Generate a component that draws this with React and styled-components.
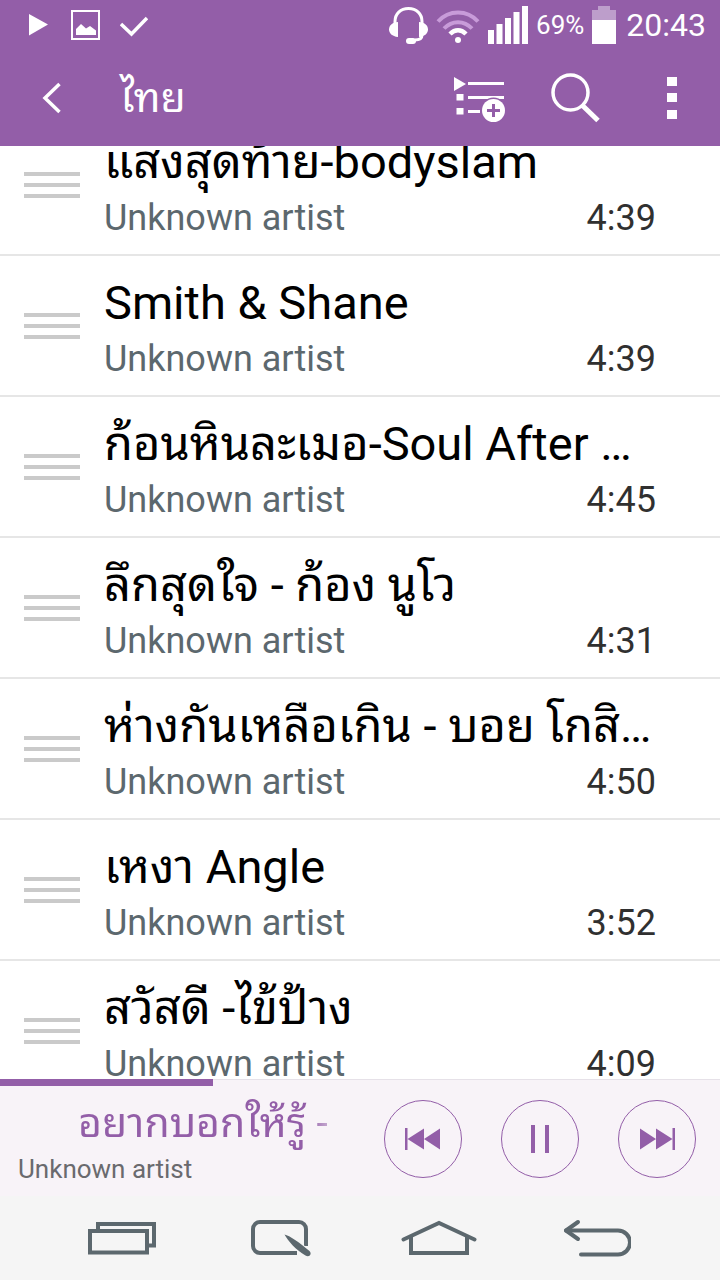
import React, { useLayoutEffect, useRef } from "react";
import styled, { createGlobalStyle } from "styled-components";

const purple = "#935ea8";
const slate = "#5c686e";

const songs = [
  { title: "แสงสุดท้าย-bodyslam", artist: "Unknown artist", time: "4:39" },
  { title: "Smith & Shane", artist: "Unknown artist", time: "4:39" },
  { title: "ก้อนหินละเมอ-Soul After …", artist: "Unknown artist", time: "4:45" },
  { title: "ลึกสุดใจ - ก้อง นูโว", artist: "Unknown artist", time: "4:31" },
  { title: "ห่างกันเหลือเกิน - บอย โกสิ…", artist: "Unknown artist", time: "4:50" },
  { title: "เหงา Angle", artist: "Unknown artist", time: "3:52" },
  { title: "สวัสดี -ไข้ป้าง", artist: "Unknown artist", time: "4:09" },
];

const SCROLL_START = 31;

export default function App() {
  const listRef = useRef(null);

  useLayoutEffect(() => {
    listRef.current.scrollTop = SCROLL_START;
  }, []);

  return (
    <>
      <GlobalStyle />
      <Screen>
        <Header>
          <StatusBar />
          <Toolbar>
            <BackButton aria-label="Back">
              <svg width="20" height="32" viewBox="0 0 20 32" fill="none">
                <path d="M17.500 2L3 16l14.500 14" stroke="#fff" strokeWidth="3.500" />
              </svg>
            </BackButton>
            <PageTitle>ไทย</PageTitle>
            <ToolButton aria-label="Add to playlist">
              <PlaylistIcon />
            </ToolButton>
            <ToolButton aria-label="Search">
              <svg width="50" height="50" viewBox="0 0 50 50" fill="none">
                <circle cx="19.500" cy="19.500" r="17.500" stroke="#fff" strokeWidth="3.500" />
                <path d="M32 33l15 14.500" stroke="#fff" strokeWidth="5" />
              </svg>
            </ToolButton>
            <ToolButton aria-label="More options">
              <svg width="10" height="44" viewBox="0 0 10 44" fill="#fff">
                <rect x="0" y="1" width="10" height="9" />
                <rect x="0" y="17" width="10" height="9" />
                <rect x="0" y="34" width="10" height="9" />
              </svg>
            </ToolButton>
          </Toolbar>
        </Header>

        <SongList ref={listRef}>
          {songs.map((song) => (
            <SongRow key={song.title}>
              <Handle aria-label="Reorder">
                <Grip />
                <Grip />
                <Grip />
              </Handle>
              <SongBody>
                <SongTitle>{song.title}</SongTitle>
                <SongMeta>
                  <Artist>{song.artist}</Artist>
                  <Duration>{song.time}</Duration>
                </SongMeta>
              </SongBody>
            </SongRow>
          ))}
        </SongList>

        <Player>
          <Progress role="progressbar" aria-valuenow={30} style={{ width: "29.6%" }} />
          <NowPlaying>
            <NowTitle>อยากบอกให้รู้ -</NowTitle>
            <NowArtist>Unknown artist</NowArtist>
          </NowPlaying>
          <Controls>
            <RoundButton aria-label="Previous">
              <svg width="36" height="24" viewBox="0 0 36 24" fill={purple}>
                <path d="M0 1h2.500v22H0zM2.500 12L19 1.500v21zM19 12L35 1.500v21z" />
              </svg>
            </RoundButton>
            <RoundButton aria-label="Pause">
              <svg width="18" height="28" viewBox="0 0 18 28" fill={purple}>
                <path d="M0 0h4v28H0zM14 0h4v28h-4z" />
              </svg>
            </RoundButton>
            <RoundButton aria-label="Next">
              <svg width="36" height="24" viewBox="0 0 36 24" fill={purple}>
                <path d="M33.500 1H36v22h-2.500zM33.500 12L17 1.500v21zM17 12L1 1.500v21z" />
              </svg>
            </RoundButton>
          </Controls>
        </Player>

        <SystemNav>
          <NavButton aria-label="Recent apps">
            <svg width="70" height="36" viewBox="0 0 70 36" fill="none" stroke={slate} strokeWidth="4">
              <path d="M10 10V4h56v21.500H60" />
              <rect x="2" y="11" width="57" height="21.500" />
            </svg>
          </NavButton>
          <NavButton aria-label="Quick memo">
            <svg width="60" height="38" viewBox="0 0 60 38" fill="none">
              <path
                d="M46 34H9a7 7 0 0 1-7-7V10a7 7 0 0 1 7-7h39a7 7 0 0 1 7 7v17"
                stroke={slate}
                strokeWidth="4"
              />
              <path d="M38 19L64 42" stroke="#f5f5f5" strokeWidth="9" />
              <path
                d="M33.500 15.500c5 1 15 8 25 16.500 3 3-.5 7-4 4.500C45 31 37 22 33.500 15.500z"
                fill={slate}
              />
            </svg>
          </NavButton>
          <NavButton aria-label="Home">
            <svg
              width="76"
              height="38"
              viewBox="0 0 76 38"
              fill="none"
              stroke={slate}
              strokeWidth="4"
              strokeLinecap="round"
            >
              <path d="M2.500 20.500L38 4l35.500 16.500" />
              <path d="M10 18v16h56V18" />
            </svg>
          </NavButton>
          <NavButton aria-label="Back">
            <svg
              width="68"
              height="38"
              viewBox="0 0 68 38"
              fill="none"
              stroke={slate}
              strokeWidth="4"
              strokeLinecap="round"
              strokeLinejoin="round"
            >
              <path d="M15 3L3 11.500 15 20" />
              <path d="M3 11.500h52a12 12 0 0 1 0 24H18" />
            </svg>
          </NavButton>
        </SystemNav>
      </Screen>
    </>
  );
}

function StatusBar() {
  return (
    <StatusRow>
      <StatusGroup $gap="20px">
        <svg width="22" height="32" viewBox="0 0 22 32" fill="#fff">
          <path d="M1 5l19 10.500L1 26.500z" />
        </svg>
        <svg width="30" height="32" viewBox="0 0 30 32" fill="none">
          <rect x="2" y="2" width="27" height="28" stroke="#fff" strokeWidth="2" />
          <path d="M6 26v-6l5-5 5 4.500 4-2.500 6 4.500V26z" fill="#fff" />
        </svg>
        <svg width="28" height="32" viewBox="0 0 28 32" fill="none">
          <path d="M1 15l10.500 10L27 9" stroke="#fff" strokeWidth="3.500" />
        </svg>
      </StatusGroup>
      <StatusGroup $gap="8px">
        <svg width="40" height="38" viewBox="0 0 40 38" fill="none">
          <path d="M7 18v-2.500C7 8 12.500 2.500 20.500 2.500S34 8 34 15.500V29c0 3.500-2 5-7 5" stroke="#fff" strokeWidth="3" />
          <path d="M10 16v15C4 30.500 1 27 1 23.500S4 16 10 16zM31 16v15c6-.5 9-4 9-7.500S37 16 31 16z" fill="#fff" />
          <rect x="18" y="32" width="10" height="6" rx="3" fill="#fff" />
        </svg>
        <svg width="44" height="38" viewBox="0 0 44 38" fill="none">
          <g stroke="#c89bd9" strokeWidth="4">
            <path d="M2 15.500c11-12 29-12 40 0" />
            <path d="M8 22.500c8-8.500 20-8.500 28 0" />
          </g>
          <path d="M14 28c5-5 11-5 16 0" stroke="#fff" strokeWidth="4.500" />
          <circle cx="22" cy="34" r="3" fill="#fff" />
        </svg>
        <svg width="40" height="38" viewBox="0 0 40 38" fill="#fff">
          <path d="M0 24h6v14H0zM8.500 18h6v20h-6zM17 12h6v26h-6zM25.500 6h6v32h-6zM34 0h6v38h-6z" />
        </svg>
        <Percent>69%</Percent>
        <svg width="24" height="38" viewBox="0 0 24 38">
          <path d="M6 0h12v4h6v10H0V4h6z" fill="#bd9ecb" />
          <path d="M0 14h24v24H0z" fill="#fff" />
        </svg>
        <Clock>20:43</Clock>
      </StatusGroup>
    </StatusRow>
  );
}

function PlaylistIcon() {
  return (
    <svg width="52" height="48" viewBox="0 0 52 48" fill="#fff">
      <path d="M0 3l12 7-12 7z" />
      <rect x="14" y="8" width="36" height="3" />
      <rect x="2.500" y="20" width="7" height="6.500" />
      <rect x="14" y="22" width="36" height="3" />
      <rect x="2.500" y="34" width="7" height="6.500" />
      <rect x="14" y="36" width="12" height="3" />
      <circle cx="39.500" cy="36.500" r="13" fill={purple} />
      <circle cx="39.500" cy="36.500" r="11.500" />
      <path d="M39.500 30v13M33 36.500h13" stroke={purple} strokeWidth="3" />
    </svg>
  );
}

const GlobalStyle = createGlobalStyle`
  * {
    box-sizing: border-box;
  }

  body {
    margin: 0;
    background: #fff;
    font-family: Roboto, "Noto Sans Thai Looped", "Droid Sans Thai", Loma, Waree, Garuda, "Noto Sans Thai", sans-serif;
  }

  button {
    display: flex;
    align-items: center;
    justify-content: center;
    padding: 0;
    border: 0;
    background: none;
    cursor: pointer;
  }

  svg {
    flex: none;
  }
`;

const Screen = styled.div`
  display: flex;
  flex-direction: column;
  height: 100vh;
`;

const Header = styled.header`
  flex: none;
  background: ${purple};
  color: #fff;
`;

const StatusRow = styled.div`
  display: flex;
  align-items: center;
  justify-content: space-between;
  height: 50px;
  padding: 0 14px 0 28px;
`;

const StatusGroup = styled.div`
  display: flex;
  align-items: center;
  gap: ${(props) => props.$gap};
`;

const Percent = styled.span`
  font-size: 26px;
  line-height: 32px;
`;

const Clock = styled.span`
  padding-left: 2px;
  font-size: 32px;
  line-height: 36px;
`;

const Toolbar = styled.div`
  display: flex;
  align-items: center;
  height: 96px;
`;

const BackButton = styled.button`
  width: 104px;
  height: 96px;
`;

const PageTitle = styled.h1`
  flex: 1;
  margin: 0;
  padding-left: 16px;
  font-size: 41px;
  font-weight: 400;
  line-height: 48px;
`;

const ToolButton = styled.button`
  width: 96px;
  height: 96px;
`;

const SongList = styled.ul`
  flex: 1;
  min-height: 0;
  margin: 0;
  padding: 0;
  overflow-y: auto;
  scrollbar-width: none;
  list-style: none;
`;

const SongRow = styled.li`
  display: flex;
  align-items: center;
  height: 141px;
  padding: 0 64px 0 24px;
  border-bottom: 2px solid #e6e6e6;
`;

const Handle = styled.button`
  flex-direction: column;
  gap: 7px;
  width: 56px;
  margin-right: 24px;
`;

const Grip = styled.span`
  width: 100%;
  height: 4px;
  background: #cacaca;
`;

const SongBody = styled.div`
  flex: 1;
  min-width: 0;
`;

const SongTitle = styled.div`
  overflow: hidden;
  color: #000;
  font-size: 47px;
  line-height: 64px;
  white-space: nowrap;
`;

const SongMeta = styled.div`
  display: flex;
  justify-content: space-between;
  margin-top: 2px;
  font-size: 36px;
  line-height: 44px;
`;

const Artist = styled.span`
  color: ${slate};
`;

const Duration = styled.span`
  color: #303030;
`;

const Player = styled.section`
  position: relative;
  display: flex;
  flex: none;
  align-items: center;
  justify-content: space-between;
  height: 117px;
  padding: 2px 24px 0 18px;
  border-top: 1px solid #e6e1e8;
  background: #f8f3f8;
`;

const Progress = styled.div`
  position: absolute;
  top: -1px;
  left: 0;
  height: 7px;
  background: ${purple};
`;

const NowPlaying = styled.div`
  flex: 1;
  min-width: 0;
`;

const NowTitle = styled.div`
  padding-left: 60px;
  overflow: hidden;
  color: ${purple};
  font-size: 41px;
  line-height: 60px;
  white-space: nowrap;
  mask-image: linear-gradient(to right, #000 290px, transparent 330px);
`;

const NowArtist = styled.div`
  color: #6a6a6e;
  font-size: 26px;
  line-height: 32px;
`;

const Controls = styled.div`
  display: flex;
  gap: 39px;
`;

const RoundButton = styled.button`
  && {
    width: 78px;
    height: 78px;
    border: 1px solid ${purple};
    border-radius: 50%;
  }
`;

const SystemNav = styled.nav`
  display: flex;
  flex: none;
  height: 84px;
  padding: 0 44px;
  background: #f5f5f5;
`;

const NavButton = styled.button`
  flex: 1;
`;
